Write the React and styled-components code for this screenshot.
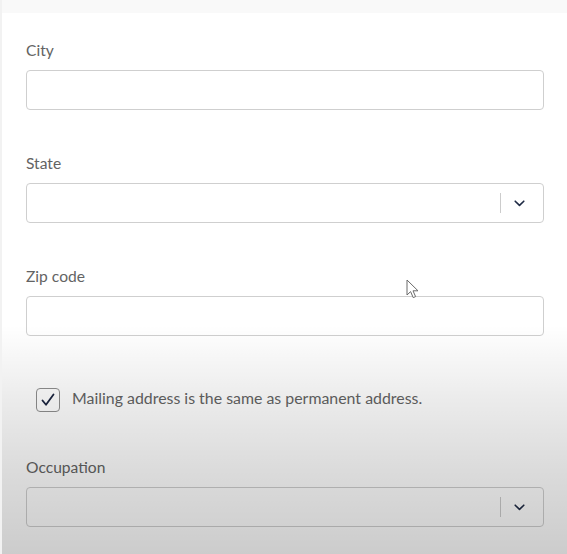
import React from 'react';
import styled, { createGlobalStyle } from 'styled-components';

const GlobalStyle = createGlobalStyle`
  html, body {
    margin: 0;
    padding: 0;
    background: #ffffff;
  }
  body {
    font-family: 'Lato', 'Open Sans', sans-serif;
  }
`;

// --- Styled Components ---
const Page = styled.div`
  position: relative;
  width: 567px;
  height: 554px;
  overflow: hidden;
  background: #ffffff;
  border-left: 2px solid #f2f2f2;
  box-sizing: border-box;
`;

const TopStrip = styled.div`
  height: 13px;
  background: #f9f9f9;
`;

const Form = styled.form`
  display: flex;
  flex-direction: column;
  gap: 43px;
  padding: 27px 23px 0 24px;
`;

const Field = styled.div`
  display: flex;
  flex-direction: column;
  gap: 10px;
`;

const Label = styled.label`
  font-size: 15.6px;
  line-height: 20px;
  color: #636363;
`;

const TextInput = styled.input`
  box-sizing: border-box;
  height: 40px;
  width: 100%;
  border: 1px solid #cfcfcf;
  border-radius: 4px;
  background: #fff;
  font: inherit;
  outline: none;
`;

const SelectBox = styled.div`
  box-sizing: border-box;
  height: 40px;
  display: flex;
  align-items: center;
  border: 1px solid #cfcfcf;
  border-radius: 4px;
  background: #fff;
`;

const SelectValue = styled.div`
  flex: 1;
`;

const Separator = styled.span`
  width: 1px;
  height: 20px;
  background: #cccccc;
`;

const Indicator = styled.div`
  display: flex;
  align-items: center;
  justify-content: center;
  padding: 0 18px 0 13px;
  color: #1e2a44;
`;

const CheckRow = styled.label`
  display: flex;
  align-items: center;
  gap: 12px;
  margin: 9px 0 2px 10px;
  font-size: 15.9px;
  line-height: 20px;
  color: #636363;
`;

const CheckText = styled.span`
  position: relative;
  top: -2px;
`;

const CheckBox = styled.span`
  box-sizing: border-box;
  width: 24px;
  height: 24px;
  border: 1.5px solid #8f8f8f;
  border-radius: 4px;
  background: #fff;
  display: flex;
  align-items: center;
  justify-content: center;
  color: #1b2540;
`;

const Shade = styled.div`
  position: absolute;
  inset: 0;
  pointer-events: none;
  background: linear-gradient(
    to bottom,
    rgba(0, 0, 0, 0) 0px,
    rgba(0, 0, 0, 0) 325px,
    rgba(0, 0, 0, 0.08) 400px,
    rgba(0, 0, 0, 0.14) 470px,
    rgba(0, 0, 0, 0.2) 554px
  );
`;

const Cursor = styled.svg`
  position: absolute;
  left: 404px;
  top: 279px;
  pointer-events: none;
`;

const Chevron = () => (
  <svg width="11" height="7" viewBox="0 0 11 7" fill="none">
    <path d="M1.2 1.2 L5.5 5.4 L9.8 1.2" stroke="currentColor" strokeWidth="1.6" strokeLinecap="round" strokeLinejoin="round" />
  </svg>
);

const Select = () => (
  <SelectBox>
    <SelectValue />
    <Separator />
    <Indicator>
      <Chevron />
    </Indicator>
  </SelectBox>
);

const App = () => {
  return (
    <Page>
      <GlobalStyle />
      <TopStrip />
      <Form>
        <Field>
          <Label>City</Label>
          <TextInput type="text" />
        </Field>
        <Field>
          <Label>State</Label>
          <Select />
        </Field>
        <Field>
          <Label>Zip code</Label>
          <TextInput type="text" />
        </Field>
        <CheckRow>
          <CheckBox>
            <svg width="16" height="14" viewBox="0 0 16 14" fill="none">
              <path d="M2.5 7.5 L6 11.8 L13.5 1.5" stroke="currentColor" strokeWidth="1.8" strokeLinecap="round" strokeLinejoin="round" />
            </svg>
          </CheckBox>
          <CheckText>Mailing address is the same as permanent address.</CheckText>
        </CheckRow>
        <Field>
          <Label>Occupation</Label>
          <Select />
        </Field>
      </Form>
      <Shade />
      <Cursor width="14" height="21" viewBox="0 0 14 21">
        <path d="M1 1 L1 16 L4.6 12.6 L7.2 18.6 L9.6 17.6 L7 11.8 L12 11.8 Z" fill="#fff" stroke="#6a6a6a" strokeWidth="1" strokeLinejoin="round" />
      </Cursor>
    </Page>
  );
};

export default App;
